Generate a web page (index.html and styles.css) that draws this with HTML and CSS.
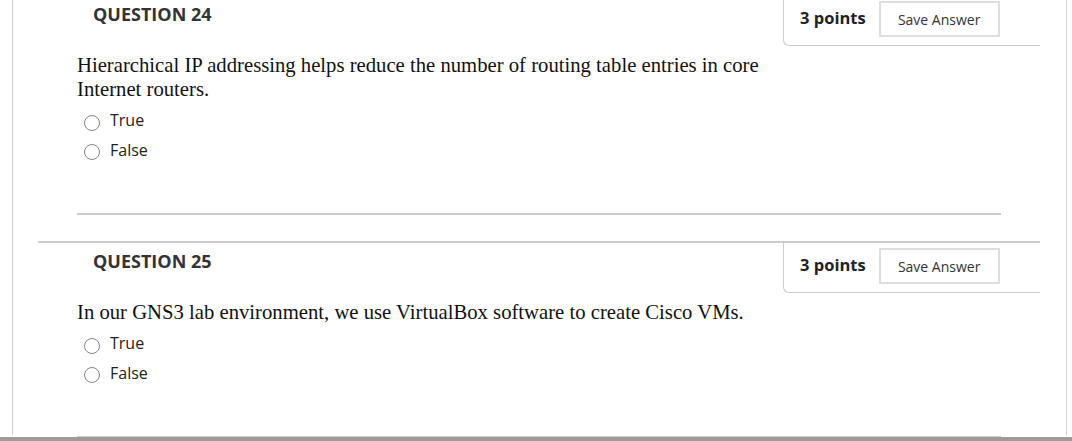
FILE: index.html
```html
<!DOCTYPE html>
<html lang="en">
<head>
<meta charset="utf-8">
<title>Questions</title>
<link rel="stylesheet" href="styles.css">
</head>
<body>
<div class="frame">
  <div class="questions">
    <section class="question">
      <div class="q-head">
        <h3 class="q-title">QUESTION 24</h3>
        <div class="q-points">
          <span class="points">3 points</span>
          <button class="save" type="button">Save Answer</button>
        </div>
      </div>
      <div class="q-body">
        <p class="q-text">Hierarchical IP addressing helps reduce the number of routing table entries in core Internet routers.</p>
        <ul class="options">
          <li class="option"><input class="radio" type="radio" name="q24" id="q24t"><label for="q24t">True</label></li>
          <li class="option"><input class="radio" type="radio" name="q24" id="q24f"><label for="q24f">False</label></li>
        </ul>
        <hr class="sep">
      </div>
    </section>
    <section class="question">
      <div class="q-head">
        <h3 class="q-title">QUESTION 25</h3>
        <div class="q-points">
          <span class="points">3 points</span>
          <button class="save" type="button">Save Answer</button>
        </div>
      </div>
      <div class="q-body">
        <p class="q-text">In our GNS3 lab environment, we use VirtualBox software to create Cisco VMs.</p>
        <ul class="options">
          <li class="option"><input class="radio" type="radio" name="q25" id="q25t"><label for="q25t">True</label></li>
          <li class="option"><input class="radio" type="radio" name="q25" id="q25f"><label for="q25f">False</label></li>
        </ul>
        <hr class="sep">
      </div>
    </section>
  </div>
</div>
<div class="bottom-edge"></div>
</body>
</html>
```

FILE: styles.css
```css
html, body {
  margin: 0;
  padding: 0;
  height: 100%;
  overflow: hidden;
  background: #fff;
}

.frame {
  margin-left: 12px;
  width: 1002px;
  height: 100%;
  border-left: 1px solid #cfcfcf;
  border-right: 1px solid #cfcfcf;
  padding: 0 26px 0 25px;
  box-sizing: content-box;
}

.questions {
  margin-top: -6px;
}

.question {
  border-top: 2px solid #cccccc;
  margin-bottom: 26px;
}

.q-head {
  display: flex;
  justify-content: space-between;
  align-items: flex-start;
}

.q-title {
  margin: 0;
  padding: 6px 0 0 55px;
  font-family: "Open Sans", sans-serif;
  font-weight: 700;
  font-size: 18px;
  line-height: 24px;
  color: #333;
}

.q-points {
  display: flex;
  align-items: center;
  gap: 13px;
  width: 257px;
  box-sizing: border-box;
  height: 50px;
  padding: 5px 0 8px 16px;
  border-left: 1px solid #cccccc;
  border-bottom: 1px solid #cccccc;
  border-bottom-left-radius: 6px;
}

.points {
  font-family: "Open Sans", sans-serif;
  font-weight: 700;
  font-size: 16.5px;
  color: #222;
  margin-top: -3px;
}

.save {
  width: 121px;
  height: 36px;
  margin: 0;
  padding: 0;
  background: #fff;
  border: 2px solid #dedede;
  border-radius: 1px;
  font-family: "Open Sans", sans-serif;
  font-size: 14px;
  color: #333;
}

.q-body {
  padding: 0 39px;
}

.q-text {
  margin: 7px 0 0;
  width: 740px;
  font-family: "Liberation Serif", "Times New Roman", serif;
  font-size: 20.7px;
  line-height: 24px;
  color: #111;
}

.options {
  list-style: none;
  margin: 6px 0 0;
  padding: 0;
}

.option {
  display: flex;
  align-items: center;
  height: 29.5px;
  padding-left: 7px;
}

.radio {
  appearance: none;
  -webkit-appearance: none;
  width: 16px;
  height: 16px;
  margin: 2px 10px 0 0;
  border: 1.5px solid #858585;
  border-radius: 50%;
  background: #fff;
  box-sizing: border-box;
}

.option label {
  font-family: "Open Sans", sans-serif;
  font-size: 16px;
  line-height: 22px;
  color: #222;
  margin-top: -3px;
}

.sep {
  margin: 47px 0 0;
  border: 0;
  height: 2px;
  background: #cccccc;
}

.bottom-edge {
  position: fixed;
  left: 0;
  right: 0;
  bottom: 0;
  height: 4px;
  background: #9c9c9c;
}
```
